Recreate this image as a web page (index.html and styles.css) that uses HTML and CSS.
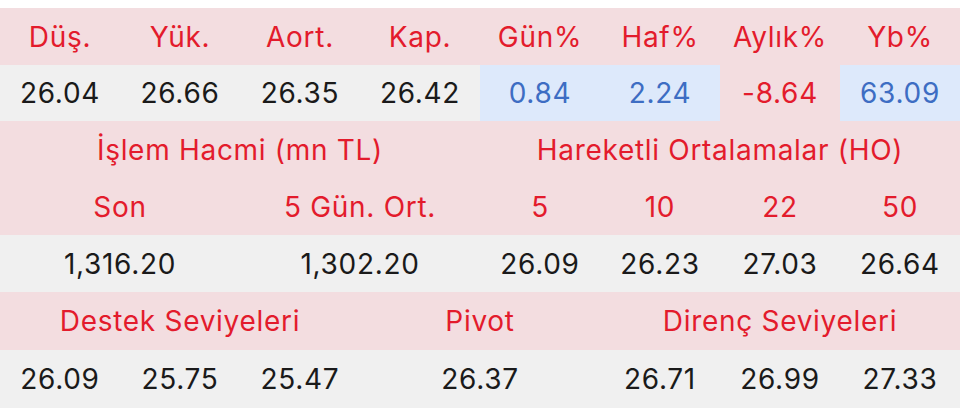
FILE: index.html
```html
<!DOCTYPE html>
<html lang="tr">
<head>
<meta charset="utf-8">
<link rel="stylesheet" href="styles.css">
</head>
<body>
<table class="stats">
  <colgroup>
    <col><col><col><col><col><col><col><col>
  </colgroup>
  <tr class="head r1">
    <th>Düş.</th><th>Yük.</th><th>Aort.</th><th>Kap.</th>
    <th>Gün%</th><th>Haf%</th><th>Aylık%</th><th>Yb%</th>
  </tr>
  <tr class="data r2">
    <td>26.04</td><td>26.66</td><td>26.35</td><td>26.42</td>
    <td class="pos">0.84</td><td class="pos">2.24</td><td class="neg">-8.64</td><td class="pos">63.09</td>
  </tr>
  <tr class="head r3">
    <th colspan="4">İşlem Hacmi (mn TL)</th>
    <th colspan="4">Hareketli Ortalamalar (HO)</th>
  </tr>
  <tr class="head r4">
    <th colspan="2">Son</th><th colspan="2">5 Gün. Ort.</th>
    <th>5</th><th>10</th><th>22</th><th>50</th>
  </tr>
  <tr class="data r5">
    <td colspan="2">1,316.20</td><td colspan="2">1,302.20</td>
    <td>26.09</td><td>26.23</td><td>27.03</td><td>26.64</td>
  </tr>
  <tr class="head r6">
    <th colspan="3">Destek Seviyeleri</th>
    <th colspan="2">Pivot</th>
    <th colspan="3">Direnç Seviyeleri</th>
  </tr>
  <tr class="data r7">
    <td>26.09</td><td>25.75</td><td>25.47</td>
    <td colspan="2">26.37</td>
    <td>26.71</td><td>26.99</td><td>27.33</td>
  </tr>
</table>
</body>
</html>
```
FILE: styles.css
```css
html, body {
  margin: 0;
  padding: 0;
  background: #ffffff;
}
body {
  padding-top: 8px;
  font-family: Inter, "Noto Sans", "Liberation Sans", sans-serif;
}
.stats {
  width: 960px;
  table-layout: fixed;
  border-collapse: collapse;
  border-spacing: 0;
}
.stats col {
  width: 120px;
}
.stats th,
.stats td {
  padding: 0;
  text-align: center;
  vertical-align: middle;
  font-size: 28px;
  font-weight: 400;
  white-space: nowrap;
  letter-spacing: 0.7px;
}
.head th {
  background: #f3dde0;
  color: #e31b2c;
}
.data td {
  background: #f0f0f0;
  color: #1a1a1a;
}
.data td.pos {
  background: #dde9fb;
  color: #3d6dc3;
}
.data td.neg {
  background: #f3dde0;
  color: #e31b2c;
}
.r1 { height: 57px; }
.r2 { height: 56px; }
.r3 { height: 57px; }
.r4 { height: 57px; }
.r5 { height: 57px; }
.r6 { height: 58px; }
.r7 { height: 58px; }
```
